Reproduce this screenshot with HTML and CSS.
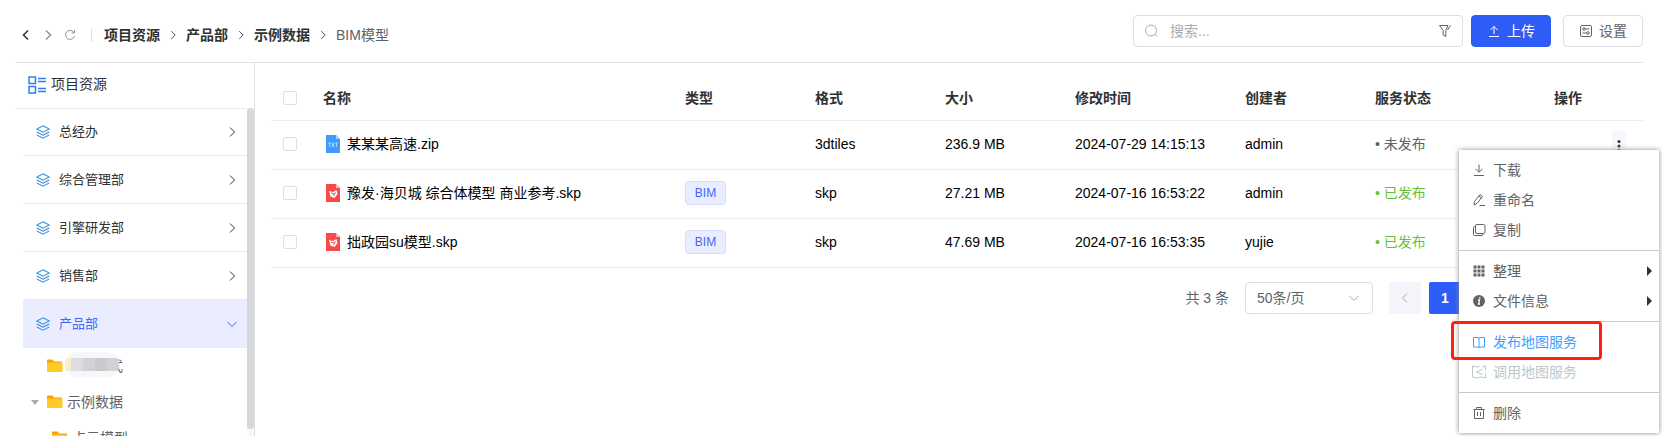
FILE: index.html
```
<!DOCTYPE html>
<html lang="zh-CN">
<head>
	<meta charset="utf-8">
	<title>项目资源</title>
	<link rel="stylesheet" href="styles.css">
</head>
<body>
	<svg class="symbols" aria-hidden="true">
		<symbol id="chevron" viewBox="0 0 14 14"><path d="M5 2.5 9.5 7 5 11.5" fill="none" stroke="currentColor"/></symbol>
		<symbol id="layers" viewBox="0 0 14 14">
			<path d="M7 .8 13.2 4 7 7.2.8 4z" fill="none" stroke="#2aa0dc" stroke-width="1.1"/>
			<path d="M.8 7 7 10.2 13.2 7" fill="none" stroke="#5b6fd0" stroke-width="1.1"/>
			<path d="M.8 10 7 13.2 13.2 10" fill="none" stroke="#2aa0dc" stroke-width="1.1"/>
		</symbol>
		<symbol id="folder" viewBox="0 0 16 14">
			<path d="M0 1.5Q0 .5 1 .5h4.500l1.500 2H15v4H0z" fill="#ffa000"/>
			<path d="M0 3.500h14.500q1 0 1 1V12q0 1-1 1H1q-1 0-1-1z" fill="#ffca28"/>
		</symbol>
		<symbol id="skp" viewBox="0 0 14 18">
			<path d="M0 0h10l4 4v14H0z" fill="#f94a4a"/>
			<path d="M10 0v4h4z" fill="#ffb3b3"/>
			<path d="M3 7l4 1 3.500-2 1 4-3 4-4-1.500z" fill="#fff"/>
			<path d="M5 9l3 1v2M8 10l2-1.500" fill="none" stroke="#f94a4a"/>
		</symbol>
	</svg>

	<div class="page">
		<header class="header">
			<div class="history">
				<button class="icon-btn" aria-label="后退"><svg class="back"><use href="#chevron"/></svg></button>
				<button class="icon-btn forward" aria-label="前进"><svg><use href="#chevron"/></svg></button>
				<button class="icon-btn refresh" aria-label="刷新"><svg viewBox="0 0 14 14"><path d="M11.200 5A4.500 4.500 0 1 0 11.500 8M11.500 2v3h-3" fill="none" stroke="currentColor"/></svg></button>
			</div>
			<nav class="breadcrumb">
				<a href="#">项目资源</a>
				<svg><use href="#chevron"/></svg>
				<a href="#">产品部</a>
				<svg><use href="#chevron"/></svg>
				<a href="#">示例数据</a>
				<svg><use href="#chevron"/></svg>
				<span>BIM模型</span>
			</nav>
			<div class="search">
				<svg viewBox="0 0 14 14"><circle cx="7" cy="6.500" r="5.500" fill="none" stroke="currentColor"/><path d="M11 10.500l2 2" stroke="currentColor"/></svg>
				<input type="text" placeholder="搜索..." aria-label="搜索">
				<button class="icon-btn" aria-label="筛选"><svg viewBox="0 0 14 14"><path d="M1.500 1.500h8.500L7.800 6.500v6L5.200 11V6.500zM12.500 1.500L9.500 6" fill="none" stroke="currentColor"/></svg></button>
			</div>
			<button class="btn primary"><svg viewBox="0 0 14 14"><path d="M7 10V2.500M3.500 6L7 2.500 10.500 6M2 12.500h10" fill="none" stroke="currentColor"/></svg>上传</button>
			<button class="btn"><svg viewBox="0 0 14 14"><rect x="1.500" y="1.500" width="11" height="11" rx="1.500" fill="none" stroke="currentColor"/><circle cx="5" cy="5" r="1.300" fill="none" stroke="currentColor"/><circle cx="9" cy="9" r="1.300" fill="none" stroke="currentColor"/><path d="M6.500 5H10.500M3.500 9h4" stroke="currentColor"/></svg>设置</button>
		</header>

		<div class="content">
			<aside class="sidebar">
				<h2 class="side-title">
					<svg viewBox="0 0 18 18"><path d="M1 1h6.500v6.500H1zM1 10.500h6.500V17H1z" fill="none" stroke="#2f7df6" stroke-width="1.500"/><path d="M10 2.500h8M10 5.500h8M10 12.500h8M10 15.500h8" stroke="#2f7df6" stroke-width="1.300"/></svg>
					项目资源
				</h2>
				<div class="side-body">
					<div class="tree">
						<a class="dept" href="#"><svg><use href="#layers"/></svg><span>总经办</span><svg class="arrow"><use href="#chevron"/></svg></a>
						<a class="dept" href="#"><svg><use href="#layers"/></svg><span>综合管理部</span><svg class="arrow"><use href="#chevron"/></svg></a>
						<a class="dept" href="#"><svg><use href="#layers"/></svg><span>引擎研发部</span><svg class="arrow"><use href="#chevron"/></svg></a>
						<a class="dept" href="#"><svg><use href="#layers"/></svg><span>销售部</span><svg class="arrow"><use href="#chevron"/></svg></a>
						<a class="dept active" href="#"><svg><use href="#layers"/></svg><span>产品部</span><svg class="arrow open"><use href="#chevron"/></svg></a>
						<a class="folder" href="#">
							<i class="caret"></i><svg><use href="#folder"/></svg>
							<span class="masked">式<i class="mosaic"><b></b><b></b><b></b><b></b><b></b></i></span>
						</a>
						<a class="folder" href="#"><i class="caret show"></i><svg><use href="#folder"/></svg><span>示例数据</span></a>
						<a class="folder child" href="#"><i class="caret"></i><svg><use href="#folder"/></svg><span>点云模型</span></a>
					</div>
					<div class="scrollbar"><div class="thumb"></div></div>
				</div>
			</aside>

			<main class="main">
				<table class="files">
					<colgroup>
						<col class="c-check"><col><col class="c-mid"><col class="c-mid"><col class="c-mid"><col class="c-time"><col class="c-mid"><col class="c-mid"><col class="c-ops">
					</colgroup>
					<thead>
						<tr>
							<th><input type="checkbox" aria-label="全选"></th>
							<th>名称</th>
							<th>类型</th>
							<th>格式</th>
							<th>大小</th>
							<th>修改时间</th>
							<th>创建者</th>
							<th>服务状态</th>
							<th class="ops-head">操作</th>
						</tr>
					</thead>
					<tbody>
						<tr>
							<td><input type="checkbox" aria-label="选择"></td>
							<td><div class="name"><svg viewBox="0 0 14 18"><path d="M0 0h10l4 4v14H0z" fill="#409bff"/><path d="M10 0v4h4z" fill="#a8d2ff"/><path d="M2.500 8h2.500M3.700 8v4M6 8l2 4M8 8l-2 4M9.200 8h2.500M10.500 8v4" stroke="#cfe6ff" stroke-width=".8"/></svg>某某某高速.zip</div></td>
							<td></td>
							<td>3dtiles</td>
							<td>236.9 MB</td>
							<td>2024-07-29 14:15:13</td>
							<td>admin</td>
							<td class="status">• 未发布</td>
							<td class="ops"><button class="more" aria-label="更多"><svg viewBox="0 0 14 30"><circle cx="7" cy="11.500" r="1.500"/><circle cx="7" cy="16" r="1.500"/><circle cx="7" cy="20.500" r="1.500"/></svg></button></td>
						</tr>
						<tr>
							<td><input type="checkbox" aria-label="选择"></td>
							<td><div class="name"><svg><use href="#skp"/></svg>豫发·海贝城 综合体模型 商业参考.skp</div></td>
							<td><span class="tag">BIM</span></td>
							<td>skp</td>
							<td>27.21 MB</td>
							<td>2024-07-16 16:53:22</td>
							<td>admin</td>
							<td class="status done">• 已发布</td>
							<td></td>
						</tr>
						<tr>
							<td><input type="checkbox" aria-label="选择"></td>
							<td><div class="name"><svg><use href="#skp"/></svg>拙政园su模型.skp</div></td>
							<td><span class="tag">BIM</span></td>
							<td>skp</td>
							<td>47.69 MB</td>
							<td>2024-07-16 16:53:35</td>
							<td>yujie</td>
							<td class="status done">• 已发布</td>
							<td></td>
						</tr>
					</tbody>
				</table>

				<div class="pagination">
					<span>共 3 条</span>
					<div class="page-size">
						<select aria-label="每页条数"><option>50条/页</option></select>
						<svg><use href="#chevron"/></svg>
					</div>
					<button class="pager" aria-label="上一页" disabled><svg class="back"><use href="#chevron"/></svg></button>
					<button class="pager current">1</button>
				</div>
			</main>
		</div>

		<!-- row context menu -->
		<div class="menu">
			<div class="group">
				<button><svg viewBox="0 0 14 14"><path d="M7 1.500V9M3.500 5.800L7 9.300l3.500-3.500M2 12.500h10" fill="none" stroke="currentColor"/></svg>下载</button>
				<button><svg viewBox="0 0 14 14"><path d="M2 12l.5-3.500L8 1.500l2.500 2L5 10.500zM6.800 3l2.500 2M7.500 12.500H13" fill="none" stroke="currentColor"/></svg>重命名</button>
				<button><svg viewBox="0 0 14 14"><rect x="3.500" y="1.500" width="9.500" height="9" rx="1.500" fill="none" stroke="currentColor"/><path d="M3.500 3.500H2.500Q1.500 3.500 1.500 4.500v7q0 1 1 1H10q1 0 1-2" fill="none" stroke="currentColor"/></svg>复制</button>
			</div>
			<div class="group">
				<button class="sub"><svg viewBox="0 0 14 14"><path d="M3 1.500v11M7 1.500v11M11 1.500v11" fill="none" stroke="currentColor" stroke-width="3" stroke-dasharray="3 1"/></svg>整理</button>
				<button class="sub"><svg viewBox="0 0 14 14"><circle cx="7" cy="7" r="6" fill="currentColor"/><path d="M7.800 3v1.600M6 6h1.500L6.600 10H8" fill="none" stroke="#fff" stroke-width="1.300"/></svg>文件信息</button>
			</div>
			<div class="group">
				<button class="hot"><svg viewBox="0 0 14 14"><path d="M1.500 2.500H5l2 .5 2-.5h3.500v9.500H9L7 12.500 5 12H1.500zM7 3v9.500" fill="none" stroke="currentColor"/></svg>发布地图服务</button>
				<button class="off" disabled><svg viewBox="0 0 14 14"><path d="M5 2L.5 1v11L5 13l4-1 4.500 1V8.500M5 2l2.500-.5M13.500 5V1L10 2M10.500 4L4.500 7l6 2.500" fill="none" stroke="currentColor"/></svg>调用地图服务</button>
			</div>
			<div class="group">
				<button><svg viewBox="0 0 14 14"><path d="M1.500 3.500h11M4.500 3.500v-2h5v2M2.500 3.500v9h9v-9M5.500 6v4M8.500 6v4" fill="none" stroke="currentColor"/></svg>删除</button>
			</div>
			<div class="highlight"></div>
		</div>
	</div>
</body>
</html>
```
FILE: styles.css
```
* {
	box-sizing: border-box;
}

body {
	margin: 0;
	background-color: #fff;
	font-family: "Liberation Sans", "Noto Sans CJK SC", sans-serif;
	font-size: 14px;
	line-height: 20px;
	color: #606266;
}

a {
	color: inherit;
	text-decoration: none;
}

button,
input,
select {
	font: inherit;
	color: inherit;
}

svg {
	display: block;
	flex: none;
	width: 14px;
	height: 14px;
}

.symbols {
	position: absolute;
	width: 0;
	height: 0;
}

.back {
	transform: scaleX(-1);
}

.page {
	position: relative;
	display: flex;
	flex-direction: column;
	height: 100vh;
	padding: 0 19px 0 15px;
	overflow: hidden;
}

/* header */
.header {
	display: flex;
	flex: none;
	align-items: center;
	height: 63px;
	border-bottom: 1px solid #dfe2ec;
}

.history {
	display: flex;
	gap: 8px;
	margin-top: 8px;
	padding: 0 14px 0 4px;
	border-right: 1px solid #dcdfe6;
}

.icon-btn {
	padding: 0;
	border: none;
	background: none;
	cursor: pointer;
}

.history .icon-btn {
	color: #303133;
}

.history .forward,
.history .refresh {
	color: #909399;
}

.history svg {
	stroke-width: 1.5;
}

.history .refresh svg {
	stroke-width: 1;
}

.breadcrumb {
	display: flex;
	flex: 1;
	align-items: center;
	gap: 7px;
	margin-top: 8px;
	padding-left: 12px;
}

.breadcrumb a {
	font-weight: bold;
	color: #303133;
}

.breadcrumb svg {
	width: 12px;
	height: 12px;
	color: #303133;
}

.search {
	display: flex;
	align-items: center;
	width: 330px;
	height: 32px;
	margin-right: 8px;
	padding: 0 10px;
	border: 1px solid #dcdfe6;
	border-radius: 4px;
}

.search > svg {
	color: #a8abb2;
}

.search input {
	flex: 1;
	min-width: 0;
	padding: 0 12px;
	border: none;
	outline: none;
	background: none;
}

.search input::placeholder {
	color: #a8abb2;
}

.btn {
	display: flex;
	align-items: center;
	justify-content: center;
	gap: 6px;
	width: 80px;
	height: 32px;
	padding: 0;
	border: 1px solid #dcdfe6;
	border-radius: 4px;
	background-color: #fff;
	cursor: pointer;
}

.btn.primary {
	margin-right: 12px;
	border-color: #2d5cf6;
	background-color: #2d5cf6;
	color: #fff;
}

.content {
	display: flex;
	flex: 1;
	min-height: 0;
}

/* sidebar */
.sidebar {
	display: flex;
	flex: none;
	flex-direction: column;
	width: 240px;
	border-right: 1px solid #dcdfe6;
}

.side-title {
	display: flex;
	flex: none;
	align-items: center;
	gap: 5px;
	height: 46px;
	margin: 0 7px 0 0;
	padding: 0 0 3px 13px;
	border-bottom: 1px solid #ebeef5;
	font-size: 14px;
	font-weight: normal;
	color: #303133;
}

.side-title svg {
	width: 18px;
	height: 18px;
	margin-top: 2px;
}

.side-body {
	display: flex;
	flex: 1;
	min-height: 0;
	margin-top: -1px;
}

.tree {
	flex: 1;
	padding-left: 8px;
	overflow: hidden;
}

.dept {
	display: flex;
	align-items: center;
	gap: 9px;
	height: 48px;
	padding: 0 8px 0 13px;
	border-bottom: 1px solid #e8eaf3;
	font-size: 13px;
	color: #303133;
}

.dept .arrow {
	margin-left: auto;
}

.dept .open {
	transform: rotate(90deg);
}

.dept.active {
	border-color: #eaedff;
	background-color: #eaedff;
	color: #4266f6;
}

.folder {
	display: flex;
	align-items: center;
	height: 36px;
	padding-left: 8px;
}

.folder.child {
	padding-left: 13px;
}

.folder svg {
	width: 16px;
	margin-right: 4px;
}

.caret {
	width: 16px;
}

.caret.show::before {
	content: "";
	display: block;
	width: 0;
	border: 4px solid transparent;
	border-top: 5px solid #a8abb2;
	border-bottom: none;
}

.masked {
	position: relative;
	width: 56px;
	text-align: right;
}

.mosaic {
	position: absolute;
	top: -4px;
	left: -2px;
	display: flex;
	width: 54px;
	height: 25px;
	padding: 6px 0;
	border-radius: 12px;
	background-color: #f6f7fa;
	overflow: hidden;
}

.mosaic b {
	flex: 1;
	background-color: #c9cacb;
}

.mosaic b:first-child {
	flex: none;
	width: 6px;
	background-color: #faedcb;
}

.mosaic b:nth-child(2) {
	background-color: #dcdde0;
}

.mosaic b:nth-child(3),
.mosaic b:last-child {
	background-color: #d2d1d4;
}

.scrollbar {
	width: 7px;
	background-color: #f8f8f9;
}

.thumb {
	height: 98%;
	border-radius: 4px;
	background-color: #d6d8da;
}

/* file table */
.main {
	flex: 1;
	min-width: 0;
	padding-left: 16px;
}

.files {
	width: 100%;
	border-collapse: collapse;
	table-layout: fixed;
	color: #000;
}

.c-check {
	width: 40px;
}

.c-mid {
	width: 130px;
}

.c-time {
	width: 170px;
}

.c-ops {
	width: 150px;
}

.files th,
.files td {
	height: 49px;
	padding: 0 12px 2px;
	border-bottom: 1px solid #ebeef5;
	text-align: left;
	white-space: nowrap;
}

.files th {
	height: 57px;
	padding-top: 16px;
	color: #303133;
}

.files .ops-head {
	text-align: center;
}

.files input {
	display: block;
	width: 14px;
	height: 14px;
	margin: 0;
	border: 1px solid #dcdfe6;
	border-radius: 2px;
	background-color: #fff;
	appearance: none;
}

.name {
	display: flex;
	align-items: center;
	gap: 7px;
	padding-left: 3px;
}

.name svg {
	height: 18px;
}

.tag {
	display: block;
	width: 41px;
	border: 1px solid #d5dcfd;
	border-radius: 4px;
	background-color: #eaedff;
	font-size: 12px;
	line-height: 22px;
	text-align: center;
	color: #4266f6;
}

.files .status {
	color: #606266;
}

.files .done {
	color: #67c23a;
}

.files .ops {
	padding: 0 17px 0 0;
}

.more {
	display: block;
	margin-left: auto;
	padding: 0;
	border: none;
	border-radius: 4px;
	background-color: #f5f7fa;
	fill: #303133;
}

.more svg {
	height: 30px;
}

.pagination {
	display: flex;
	align-items: center;
	justify-content: flex-end;
	padding: 14px 182px 0 0;
}

.page-size {
	position: relative;
	width: 128px;
	margin: 0 16px;
}

.page-size select {
	width: 100%;
	height: 32px;
	padding: 0 11px;
	border: 1px solid #dcdfe6;
	border-radius: 4px;
	background-color: #fff;
	appearance: none;
}

.page-size svg {
	position: absolute;
	top: 9px;
	right: 12px;
	color: #a8abb2;
	transform: rotate(90deg);
	pointer-events: none;
}

.pager {
	display: flex;
	align-items: center;
	justify-content: center;
	width: 32px;
	height: 32px;
	padding: 0;
	border: none;
	border-radius: 2px;
	background-color: #f4f5fa;
	color: #a8abb2;
}

.pager.current {
	margin-left: 8px;
	background-color: #2d5cf6;
	font-weight: bold;
	color: #fff;
}

/* context menu */
.menu {
	position: absolute;
	top: 150px;
	right: 3px;
	width: 200px;
	background-color: #fff;
	box-shadow: 0 0 5px #888;
}

.group {
	padding: 5px 0;
}

.group + .group {
	border-top: 1px solid #c8c9cc;
}

.menu button {
	display: flex;
	align-items: center;
	gap: 7px;
	width: 100%;
	height: 30px;
	padding: 0 7px 0 13px;
	border: none;
	background: none;
	cursor: pointer;
}

.menu .sub::after {
	content: "";
	margin-left: auto;
	border: 5px solid transparent;
	border-left-color: #303133;
	border-right: none;
}

.menu .hot {
	color: #409eff;
}

.menu .off {
	color: #b9c8c8;
}

.highlight {
	position: absolute;
	top: 171px;
	left: -8px;
	width: 151px;
	height: 39px;
	border: 3px solid #ff1f14;
	border-radius: 4px;
	pointer-events: none;
}
```
